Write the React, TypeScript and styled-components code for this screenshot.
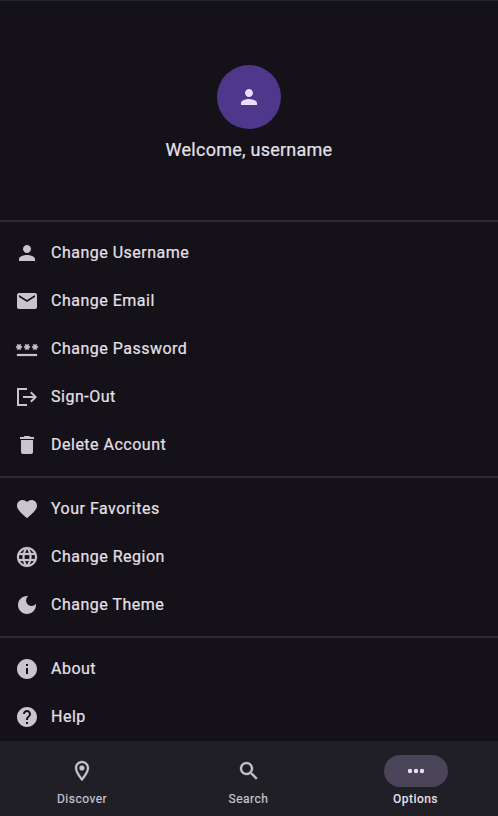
import React from "react";
import styled, { createGlobalStyle } from "styled-components";

const GlobalStyle = createGlobalStyle`
  * { box-sizing: border-box; }
  html, body { margin: 0; background: #141218; }
  body { font-family: Roboto, "Liberation Sans", sans-serif; overflow: hidden; }
`;

const Screen = styled.div`
  display: flex;
  flex-direction: column;
  height: 816px;
  background: #141218;
  border-top: 1px solid #242529;
`;

const Profile = styled.header`
  display: flex;
  flex-direction: column;
  align-items: center;
  height: 219px;
  padding-top: 64px;
  flex: none;
`;

const Avatar = styled.div`
  display: grid;
  place-items: center;
  width: 64px;
  height: 64px;
  border-radius: 50%;
  background: #4f378b;
  color: #eaddff;
`;

const Greeting = styled.h1`
  margin: 8px 0 0;
  font-size: 18px;
  font-weight: 400;
  line-height: 26px;
  letter-spacing: 0.25px;
  color: #e6e0e9;
  -webkit-text-stroke: 0.2px #e6e0e9;
`;

const Section = styled.ul`
  flex: none;
  margin: 0;
  padding: 7px 0;
  list-style: none;
  border-top: 2px solid #2d2b32;

  &:last-of-type { padding-bottom: 0; }
`;

const Row = styled.li`
  display: flex;
  align-items: center;
  gap: 12px;
  height: 48px;
  padding-left: 15px;
  color: #cac4d0;
`;

const Label = styled.span`
  font-size: 16px;
  line-height: 24px;
  font-weight: 400;
  letter-spacing: 0.5px;
  color: #e6e0e9;
  -webkit-text-stroke: 0.2px #e6e0e9;
  margin-top: -1px;
`;

const NavBar = styled.nav`
  display: grid;
  grid-template-columns: 164px 169px 165px;
  height: 75px;
  background: #211f26;
  flex: none;
`;

const Tab = styled.div<{ $active?: boolean }>`
  display: flex;
  flex-direction: column;
  align-items: center;
  padding-top: 14px;
  font-size: 12px;
  line-height: 16px;
  font-weight: ${(p) => (p.$active ? 500 : 400)};
  letter-spacing: ${(p) => (p.$active ? "0.45px" : "0.5px")};
  gap: 4px;
  color: ${(p) => (p.$active ? "#e6e0e9" : "#cac4d0")};
  -webkit-text-stroke: ${(p) => (p.$active ? "0" : "0.2px #cac4d0")};
`;

const Pill = styled.div<{ $active?: boolean }>`
  display: grid;
  place-items: center;
  width: 64px;
  height: 32px;
  border-radius: 16px;
  background: ${(p) => (p.$active ? "#4a4458" : "transparent")};
  color: ${(p) => (p.$active ? "#e8def8" : "#cac4d0")};
`;

const Svg = styled.svg<{ $weight: number }>`
  display: block;
  width: 24px;
  height: 24px;
  fill: currentColor;
  stroke: currentColor;
  stroke-width: ${(p) => p.$weight};
  flex: none;
`;

const paths = {
  person: "M12 12c2.21 0 4-1.79 4-4s-1.79-4-4-4-4 1.79-4 4 1.79 4 4 4zm0 2c-2.67 0-8 1.34-8 4v2h16v-2c0-2.66-5.33-4-8-4z",
  mail: "M20 4H4c-1.1 0-1.99.9-1.99 2L2 18c0 1.1.9 2 2 2h16c1.1 0 2-.9 2-2V6c0-1.1-.9-2-2-2zm0 4l-8 5-8-5V6l8 5 8-5v2z",
  password: "M2 17h20v2H2v-2zm1.15-4.05L4 11.47l.85 1.48 1.3-.75-.85-1.48H7v-1.5H5.3l.85-1.47L4.85 7 4 8.47 3.15 7l-1.3.75.85 1.47H1v1.5h1.7l-.85 1.48 1.3.75zm6.7-.75l1.3.75.85-1.48.85 1.48 1.3-.75-.85-1.48H15v-1.5h-1.7l.85-1.47-1.3-.75L12 8.47 11.15 7l-1.3.75.85 1.47H9v1.5h1.7l-.85 1.48zM23 9.22h-1.7l.85-1.47-1.3-.75L20 8.47 19.15 7l-1.3.75.85 1.47H17v1.5h1.7l-.85 1.48 1.3.75.85-1.48.85 1.48 1.3-.75-.85-1.48H23v-1.5z",
  signOut: "M2 3h10v2H4v14h8v2H2V3zM8 11h10.2l-3.1-3.1 1.4-1.4L22 12l-5.5 5.5-1.4-1.4 3.1-3.1H8v-2z",
  trash: "M6 19c0 1.1.9 2 2 2h8c1.1 0 2-.9 2-2V7H6v12zM19 4h-3.5l-1-1h-5l-1 1H5v2h14V4z",
  heart: "M12 21.35l-1.45-1.32C5.4 15.36 2 12.28 2 8.5 2 5.42 4.42 3 7.5 3c1.74 0 3.41.81 4.5 2.09C13.09 3.81 14.76 3 16.5 3 19.58 3 22 5.42 22 8.5c0 3.78-3.4 6.86-8.55 11.54L12 21.35z",
  globe: "M11.99 2C6.47 2 2 6.48 2 12s4.47 10 9.99 10C17.52 22 22 17.52 22 12S17.52 2 11.99 2zm6.93 6h-2.95c-.32-1.25-.78-2.45-1.38-3.56 1.84.63 3.37 1.91 4.33 3.56zM12 4.04c.83 1.2 1.48 2.53 1.91 3.96h-3.82c.43-1.43 1.08-2.76 1.91-3.96zM4.26 14C4.1 13.36 4 12.69 4 12s.1-1.36.26-2h3.38c-.08.66-.14 1.32-.14 2s.06 1.34.14 2H4.26zm.82 2h2.95c.32 1.25.78 2.45 1.38 3.56-1.84-.63-3.37-1.9-4.33-3.56zm2.95-8H5.08c.96-1.66 2.49-2.93 4.33-3.56C8.81 5.55 8.35 6.75 8.03 8zM12 19.96c-.83-1.2-1.48-2.53-1.91-3.96h3.82c-.43 1.43-1.08 2.76-1.91 3.96zM14.34 14H9.66c-.09-.66-.16-1.32-.16-2s.07-1.35.16-2h4.68c.09.65.16 1.32.16 2s-.07 1.34-.16 2zm.25 5.56c.6-1.11 1.06-2.31 1.38-3.56h2.95c-.96 1.65-2.49 2.93-4.33 3.56zM16.36 14c.08-.66.14-1.32.14-2s-.06-1.34-.14-2h3.38c.16.64.26 1.31.26 2s-.1 1.36-.26 2h-3.38z",
  moon: "M12 3c-4.97 0-9 4.03-9 9s4.03 9 9 9 9-4.03 9-9c0-.46-.04-.92-.1-1.36-.98 1.37-2.58 2.26-4.4 2.26-2.98 0-5.4-2.42-5.4-5.4 0-1.81.89-3.42 2.26-4.4-.44-.06-.9-.1-1.36-.1z",
  info: "M12 2C6.48 2 2 6.48 2 12s4.48 10 10 10 10-4.48 10-10S17.52 2 12 2zm1 15h-2v-6h2v6zm0-8h-2V7h2v2z",
  help: "M12 2C6.48 2 2 6.48 2 12s4.48 10 10 10 10-4.48 10-10S17.52 2 12 2zm1 17h-2v-2h2v2zm2.07-7.75l-.9.92C13.45 12.9 13 13.5 13 15h-2v-.5c0-1.1.45-2.1 1.17-2.83l1.24-1.26c.37-.36.59-.86.59-1.41 0-1.1-.9-2-2-2s-2 .9-2 2H8c0-2.21 1.79-4 4-4s4 1.79 4 4c0 .88-.36 1.68-.93 2.25z",
  pin: "M12 2C8.13 2 5 5.13 5 9c0 5.25 7 13 7 13s7-7.75 7-13c0-3.87-3.13-7-7-7zM7 9c0-2.76 2.24-5 5-5s5 2.24 5 5c0 2.88-2.88 7.19-5 9.88C9.92 16.21 7 11.85 7 9zm5-2.5a2.5 2.5 0 1 0 0 5 2.5 2.5 0 0 0 0-5z",
  search: "M15.5 14h-.79l-.28-.27C15.41 12.59 16 11.11 16 9.5 16 5.91 13.09 3 9.5 3S3 5.91 3 9.5 5.91 16 9.5 16c1.61 0 3.09-.59 4.23-1.57l.27.28v.79l5 4.99L20.49 19l-4.99-5zm-6 0C7.01 14 5 11.99 5 9.5S7.01 5 9.5 5 14 7.01 14 9.5 11.99 14 9.5 14z",
  dots: "M6 9.8a2.2 2.2 0 1 0 0 4.4 2.2 2.2 0 0 0 0-4.4zm6 0a2.2 2.2 0 1 0 0 4.4 2.2 2.2 0 0 0 0-4.4zm6 0a2.2 2.2 0 1 0 0 4.4 2.2 2.2 0 0 0 0-4.4z",
};

type IconName = keyof typeof paths;

const weights: Partial<Record<IconName, number>> = {
  search: 0.3,
  pin: 0.3,
  globe: 0.2,
  password: 0.2,
};

const Icon = ({ name }: { name: IconName }) => (
  <Svg viewBox="0 0 24 24" $weight={weights[name] ?? 0} aria-hidden="true">
    <path d={paths[name]} />
  </Svg>
);

const sections: { icon: IconName; label: string }[][] = [
  [
    { icon: "person", label: "Change Username" },
    { icon: "mail", label: "Change Email" },
    { icon: "password", label: "Change Password" },
    { icon: "signOut", label: "Sign-Out" },
    { icon: "trash", label: "Delete Account" },
  ],
  [
    { icon: "heart", label: "Your Favorites" },
    { icon: "globe", label: "Change Region" },
    { icon: "moon", label: "Change Theme" },
  ],
  [
    { icon: "info", label: "About" },
    { icon: "help", label: "Help" },
  ],
];

const tabs: { icon: IconName; label: string; active?: boolean }[] = [
  { icon: "pin", label: "Discover" },
  { icon: "search", label: "Search" },
  { icon: "dots", label: "Options", active: true },
];

export default function App() {
  return (
    <>
      <GlobalStyle />
      <Screen>
        <Profile>
          <Avatar>
            <Icon name="person" />
          </Avatar>
          <Greeting>Welcome, username</Greeting>
        </Profile>
        {sections.map((rows, i) => (
          <Section key={i}>
            {rows.map((row) => (
              <Row key={row.label}>
                <Icon name={row.icon} />
                <Label>{row.label}</Label>
              </Row>
            ))}
          </Section>
        ))}
        <NavBar>
          {tabs.map((tab) => (
            <Tab key={tab.label} $active={tab.active}>
              <Pill $active={tab.active}>
                <Icon name={tab.icon} />
              </Pill>
              {tab.label}
            </Tab>
          ))}
        </NavBar>
      </Screen>
    </>
  );
}
